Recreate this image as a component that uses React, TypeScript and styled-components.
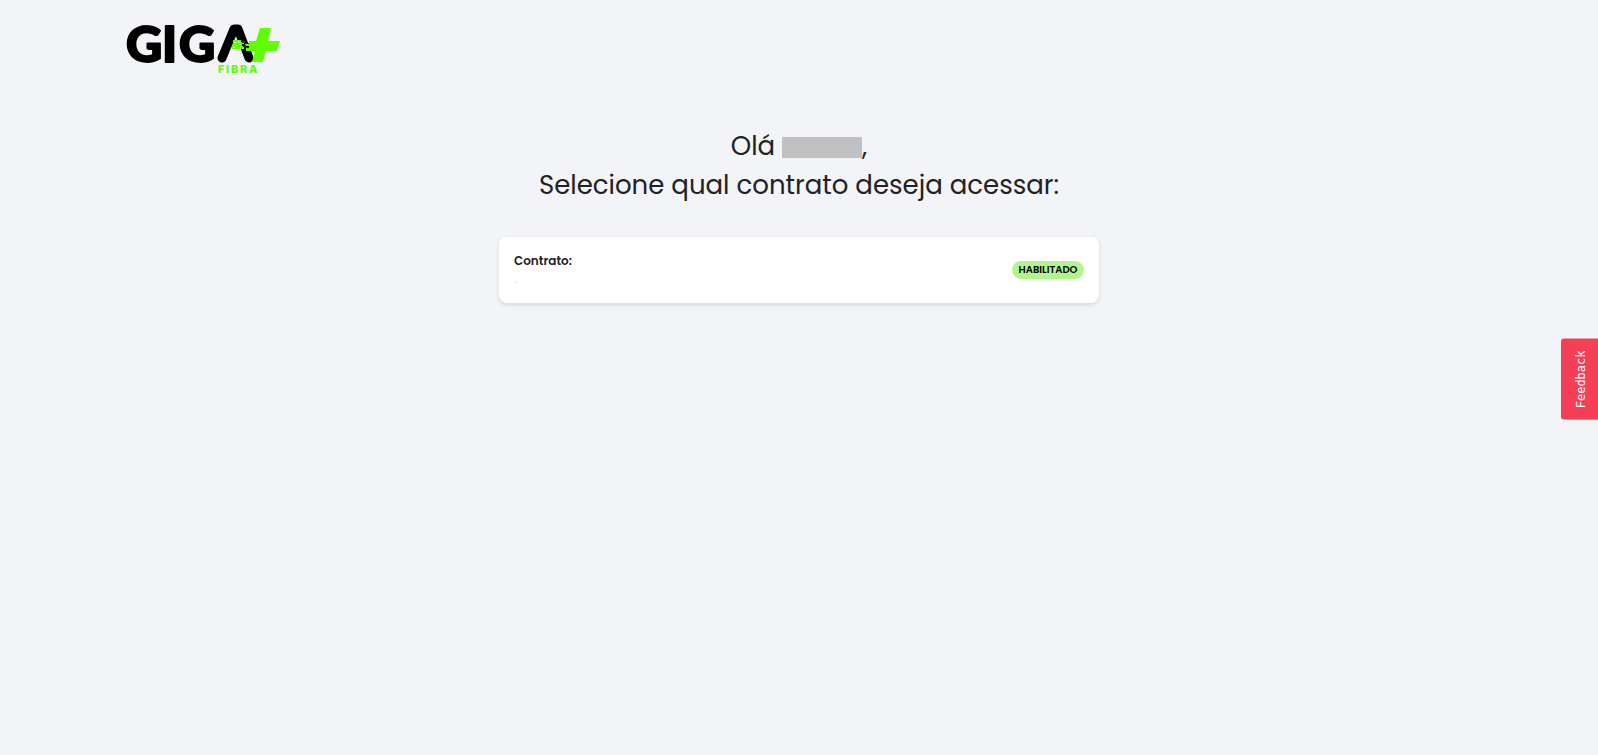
import React from "react";
import styled, { createGlobalStyle } from "styled-components";

const GlobalStyle = createGlobalStyle`
  * { box-sizing: border-box; }
  body {
    margin: 0;
    background: #f2f4f8;
    color: #222;
    font-family: Poppins, Inter, "Liberation Sans", sans-serif;
  }
`;

const Page = styled.div`
  min-height: 100vh;
`;

const Header = styled.header`
  display: flex;
  padding: 20px 124px;
`;

const HomeLink = styled.a`
  display: block;
  height: 60px;
`;

const LogoDrawing = styled.svg`
  display: block;
  overflow: visible;
`;

const Main = styled.main`
  display: flex;
  flex-direction: column;
  align-items: center;
  gap: 32px;
  padding: 27px 16px;
`;

const Greeting = styled.h1`
  margin: 0;
  font-size: 26px;
  font-weight: 400;
  line-height: 39px;
  text-align: center;
`;

const HiddenName = styled.span`
  display: inline-block;
  width: 80px;
  height: 21px;
  border-radius: 1px;
  background: #c0c0c0;
  vertical-align: -3px;
`;

const ContractCard = styled.button`
  display: flex;
  align-items: center;
  justify-content: space-between;
  width: 100%;
  max-width: 600px;
  padding: 15px;
  border: 0;
  border-radius: 8px;
  background: #fff;
  box-shadow: 0 2px 4px rgba(0, 0, 0, 0.12);
  color: inherit;
  font-family: inherit;
  text-align: left;
  cursor: pointer;
`;

const ContractInfo = styled.span`
  display: flex;
  flex-direction: column;
`;

const ContractLabel = styled.span`
  font-size: 12px;
  font-weight: 600;
  line-height: 18px;
`;

const ContractMark = styled.span`
  display: flex;
  align-items: flex-end;
  height: 18px;
  padding: 0 0 5px 2px;

  &::before {
    content: "";
    width: 1px;
    height: 1px;
    background: #8fd3f7;
  }
`;

const Status = styled.span`
  min-width: 72px;
  padding: 0 6px;
  border-radius: 9px;
  background: #b4f48f;
  color: #000;
  font-size: 10px;
  font-weight: 600;
  line-height: 18px;
  text-align: center;
`;

const FeedbackTab = styled.button`
  position: fixed;
  top: 50%;
  right: 0;
  display: flex;
  align-items: center;
  justify-content: center;
  width: 37px;
  height: 81px;
  margin-top: 1px;
  padding: 2px 0 0 2px;
  border: 0;
  border-radius: 3px 0 0 3px;
  background: #f43f57;
  color: #fff;
  font-family: "DejaVu Sans Mono", monospace;
  font-size: 12px;
  line-height: 16px;
  transform: translateY(-50%);
  cursor: pointer;

  span {
    writing-mode: vertical-rl;
    transform: rotate(180deg);
  }
`;

const Logo = () => (
  <LogoDrawing width="160" height="60" viewBox="0 0 160 60" role="img" aria-label="GIGA+ Fibra">
    <g fill="#000" stroke="#000" strokeWidth="2" strokeLinejoin="round" fontFamily="Lato, sans-serif" fontWeight="900" fontSize="50">
      <text x="2" y="42">G</text>
      <text x="38" y="42">I</text>
      <text x="55" y="42">G</text>
    </g>
    <path d="M98 38 L110 9 H114 L125 38" fill="none" stroke="#000" strokeWidth="9" strokeLinejoin="round" strokeLinecap="round" />
    <g fill="#5fff00">
      <path d="M136 8 H147 L144 21 H156 L153 31 H142 L139 42 H128 L131 31 H122 V28 H125 V26 H121 V24 H125 V21 H132 Z" />
      <path d="M109 20h8v2h3v2h-2v2h2v3h-12v-4h1z" />
    </g>
    <path d="M110 22h2v1h-2zM114 21h1v2h-1zM112 25h2v1h-2zM109 27h2v1h-2zM115 24h2v1h-2zM116 27h1v1h-1z" fill="#d8ffc4" />
    <path d="M118 21h3v2h-3zM121 23h4v1h-4zM119 25h3v2h-3zM122 27h3v1h-3z" fill="#143b00" />
    <g fill="#5fff00" fontFamily="Inter, sans-serif" fontWeight="800" fontSize="11">
      <text x="94 102 107 116 125" y="53">FIBRA</text>
    </g>
  </LogoDrawing>
);

export default function App() {
  return (
    <Page>
      <GlobalStyle />
      <Header>
        <HomeLink href="#">
          <Logo />
        </HomeLink>
      </Header>
      <Main>
        <Greeting>
          Olá <HiddenName />,
          <br />
          Selecione qual contrato deseja acessar:
        </Greeting>
        <ContractCard type="button">
          <ContractInfo>
            <ContractLabel>Contrato:</ContractLabel>
            <ContractMark />
          </ContractInfo>
          <Status>HABILITADO</Status>
        </ContractCard>
      </Main>
      <FeedbackTab type="button">
        <span>Feedback</span>
      </FeedbackTab>
    </Page>
  );
}
